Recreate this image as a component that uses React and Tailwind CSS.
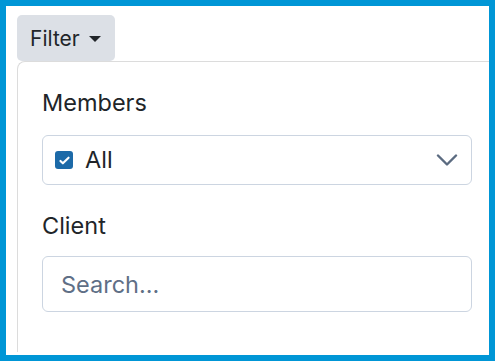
export default function App() {
  return (
    <div
      className="h-[361px] w-[495px] overflow-hidden border-[6px] border-[#0096d6] bg-white pl-[11px] pt-[9px] text-[#212529]"
      style={{ fontFamily: 'Inter, "Noto Sans", sans-serif' }}
    >
      <button className="flex h-[46px] w-[98px] items-center gap-[9px] rounded-[5px] bg-[#dce0e6] pl-[13px] text-[21px] leading-none">
        Filter
        <span className="mt-[2px] h-0 w-0 border-x-[6px] border-t-[6px] border-x-transparent border-t-[#212529]" />
      </button>

      <div className="w-[479px] rounded-tl-[8px] border-l border-t border-[#dcdcdc] px-6 pb-10 pt-6">
        <div className="text-[23.5px] leading-[33px]">Members</div>
        <div className="mt-4 flex h-[50px] items-center rounded-[6px] border border-[#ccd5e1] pl-[12px] pr-[13px]">
          <span className="flex h-[18px] w-[18px] items-center justify-center rounded-[3px] bg-[#1c6aa8]">
            <svg viewBox="0 0 16 16" className="h-[13px] w-[13px]" fill="none">
              <path d="M3 8.5l3 3 7-7" stroke="white" strokeWidth="2.6" strokeLinecap="round" strokeLinejoin="round" />
            </svg>
          </span>
          <span className="ml-[12px] flex-1 text-[23.5px]">All</span>
          <svg viewBox="0 0 22 12" className="h-[12px] w-[22px]" fill="none">
            <path d="M2 1.5l9 9 9-9" stroke="#5b6b80" strokeWidth="2.4" strokeLinecap="round" strokeLinejoin="round" />
          </svg>
        </div>

        <div className="mt-6 text-[23.5px] leading-[33px]">Client</div>
        <input
          className="mt-[14px] block h-[56px] w-full rounded-[6px] border border-[#ccd5e1] px-[18px] text-[23.5px] placeholder:text-[#5f6f86] focus:outline-none"
          placeholder="Search..."
        />
      </div>
    </div>
  );
}
